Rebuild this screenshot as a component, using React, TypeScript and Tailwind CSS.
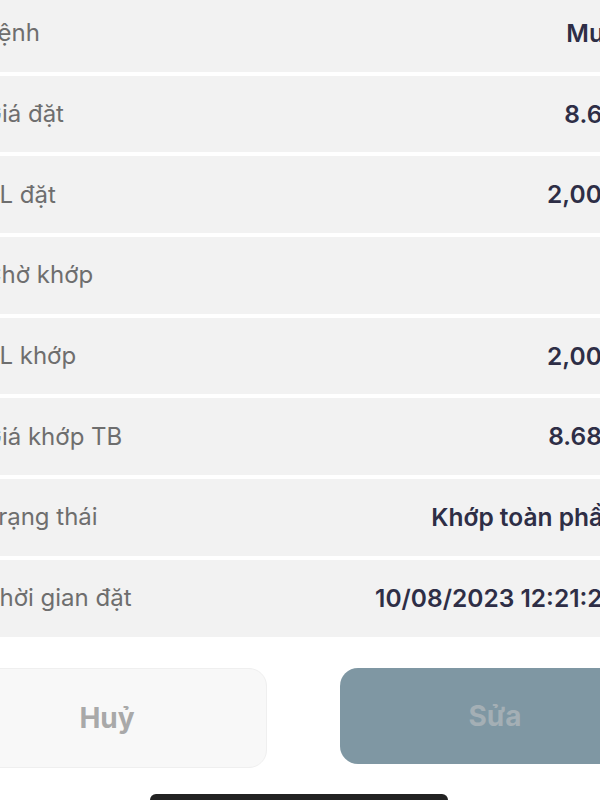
const rows: { label: string; value: string }[] = [
  { label: "Lệnh", value: "Mua" },
  { label: "Giá đặt", value: "8.68" },
  { label: "SL đặt", value: "2,000" },
  { label: "Chờ khớp", value: "" },
  { label: "SL khớp", value: "2,000" },
  { label: "Giá khớp TB", value: "8.680" },
  { label: "Trạng thái", value: "Khớp toàn phần" },
  { label: "Thời gian đặt", value: "10/08/2023 12:21:25" },
];

export default function App() {
  return (
    <div className="relative w-[600px] h-[800px] overflow-hidden bg-white font-['Inter','Noto_Sans',sans-serif]">
      <div className="-mt-[5px] -ml-[16px] w-[634px] flex flex-col gap-[4px]">
        {rows.map((row, index) => (
          <div
            key={index}
            className="h-[76.7px] bg-[#f2f2f2] flex items-center justify-between"
          >
            <span className="text-[24px] text-[#6e6e6e] whitespace-nowrap">
              {row.label}
            </span>
            <span className="text-[24.5px] font-semibold text-[#2e2e46] whitespace-nowrap">
              {row.value}
            </span>
          </div>
        ))}
      </div>

      <div className="mt-[31px] -ml-[53px] flex gap-[73px] w-[760px]">
        <button className="w-[320px] h-[100px] shrink-0 rounded-[18px] bg-[#f8f8f8] border border-[#efefef] text-[28px] font-bold text-[#a9a9a9]">
          Huỷ
        </button>
        <button className="w-[310px] h-[96px] shrink-0 rounded-[18px] bg-[#7f97a3] text-[28px] font-bold text-[#a4afb5]">
          Sửa
        </button>
      </div>

      <div className="absolute left-[150px] top-[794px] w-[298px] h-[12px] rounded-full bg-[#222222]" />
    </div>
  );
}
